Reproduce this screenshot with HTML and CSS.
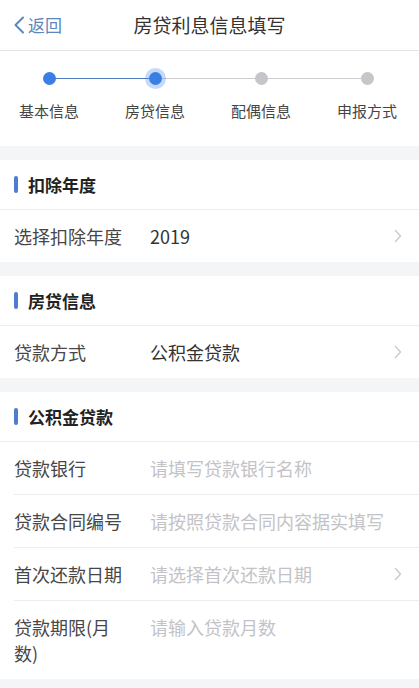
FILE: index.html
```html
<!DOCTYPE html>
<html lang="zh-CN">
<head>
<meta charset="utf-8">
<title>房贷利息信息填写</title>
<link rel="stylesheet" href="styles.css">
</head>
<body>
<header class="nav">
  <a class="back">
    <svg class="back-icon" width="12" height="18" viewBox="0 0 12 18"><path d="M10 1.5 L2.5 9 L10 16.5" fill="none" stroke="#5b87bb" stroke-width="2" stroke-linecap="round" stroke-linejoin="round"/></svg>
    <span>返回</span>
  </a>
  <h1 class="nav-title">房贷利息信息填写</h1>
  <span></span>
</header>

<section class="steps">
  <div class="step done"><span class="dot"></span><span class="step-label">基本信息</span></div>
  <div class="step current"><span class="dot"></span><span class="step-label">房贷信息</span></div>
  <div class="step"><span class="dot"></span><span class="step-label">配偶信息</span></div>
  <div class="step last"><span class="dot"></span><span class="step-label">申报方式</span></div>
</section>

<section class="group">
  <div class="group-head"><span class="bar"></span><span class="group-title">扣除年度</span></div>
  <div class="row">
    <span class="label">选择扣除年度</span>
    <span class="value">2019</span>
    <svg class="chev" width="8" height="14" viewBox="0 0 8 14"><path d="M1.5 1.5 L6.5 7 L1.5 12.5" fill="none" stroke="#c9c9ce" stroke-width="1.4" stroke-linecap="round" stroke-linejoin="round"/></svg>
  </div>
</section>

<section class="group">
  <div class="group-head"><span class="bar"></span><span class="group-title">房贷信息</span></div>
  <div class="row">
    <span class="label">贷款方式</span>
    <span class="value">公积金贷款</span>
    <svg class="chev" width="8" height="14" viewBox="0 0 8 14"><path d="M1.5 1.5 L6.5 7 L1.5 12.5" fill="none" stroke="#c9c9ce" stroke-width="1.4" stroke-linecap="round" stroke-linejoin="round"/></svg>
  </div>
</section>

<section class="group">
  <div class="group-head"><span class="bar"></span><span class="group-title">公积金贷款</span></div>
  <div class="row">
    <span class="label">贷款银行</span>
    <span class="value placeholder">请填写贷款银行名称</span>
  </div>
  <div class="row">
    <span class="label">贷款合同编号</span>
    <span class="value placeholder">请按照贷款合同内容据实填写</span>
  </div>
  <div class="row">
    <span class="label">首次还款日期</span>
    <span class="value placeholder">请选择首次还款日期</span>
    <svg class="chev" width="8" height="14" viewBox="0 0 8 14"><path d="M1.5 1.5 L6.5 7 L1.5 12.5" fill="none" stroke="#c9c9ce" stroke-width="1.4" stroke-linecap="round" stroke-linejoin="round"/></svg>
  </div>
  <div class="row">
    <span class="label">贷款期限(月数)</span>
    <span class="value placeholder">请输入贷款月数</span>
  </div>
</section>
</body>
</html>
```

FILE: styles.css
```css
* { box-sizing: border-box; }
html, body { margin: 0; padding: 0; }
body {
  width: 419px;
  min-height: 688px;
  background: #f4f5f7;
  font-family: "PingFang SC", "Noto Sans CJK SC", "Noto Sans", sans-serif;
  color: #333;
  overflow: hidden;
}

.nav {
  height: 51px;
  background: #fff;
  border-bottom: 1px solid #e3e4e6;
  display: grid;
  grid-template-columns: 1fr auto 1fr;
  align-items: center;
}
.back {
  display: flex;
  align-items: center;
  gap: 3px;
  padding-left: 13px;
  color: #5b87bb;
  font-size: 17px;
  line-height: 24px;
}
.back-icon { display: block; }
.nav-title {
  margin: 0;
  font-size: 19px;
  font-weight: 400;
  color: #333;
  line-height: 26px;
}

.steps {
  background: #fff;
  display: grid;
  grid-template-columns: repeat(4, 106px);
  width: 424px;
  margin-left: -4px;
  padding: 21px 0 24px;
}
.step {
  position: relative;
  display: flex;
  flex-direction: column;
  align-items: center;
}
.step::after {
  content: "";
  position: absolute;
  left: 50%;
  width: 100%;
  top: 6px;
  height: 1px;
  background: #cdcdd1;
}
.step.done::after { background: #4f7bc0; }
.step.last::after { display: none; }
.dot {
  position: relative;
  z-index: 1;
  width: 13px;
  height: 13px;
  border-radius: 50%;
  background: #c5c5ca;
}
.step.done .dot, .step.current .dot { background: #3a7fe6; }
.step.current .dot { box-shadow: 0 0 0 4px rgba(74, 140, 235, 0.32); }
.step-label {
  margin-top: 15px;
  font-size: 15px;
  line-height: 22px;
  color: #444;
}

.group {
  background: #fff;
  margin-top: 14px;
}
.group-head {
  height: 50px;
  display: flex;
  align-items: center;
  padding-left: 14px;
  border-bottom: 1px solid #ededef;
}
.bar {
  width: 4px;
  height: 17px;
  border-radius: 2px;
  background: #4d7dcc;
  margin-right: 10px;
}
.group-title {
  font-size: 17px;
  font-weight: 700;
  color: #222;
}

.row {
  margin-left: 14px;
  padding: 13px 17px 13px 0;
  display: flex;
  align-items: flex-start;
  font-size: 18px;
  line-height: 26px;
}
.row + .row { border-top: 1px solid #ededef; }
.label {
  width: 116px;
  flex-shrink: 0;
  margin-right: 20px;
  color: #474747;
}
.value {
  flex: 1;
  color: #333;
}
.placeholder { color: #c3c3c7; }
.chev {
  display: block;
  margin-top: 6px;
  flex-shrink: 0;
}
```
